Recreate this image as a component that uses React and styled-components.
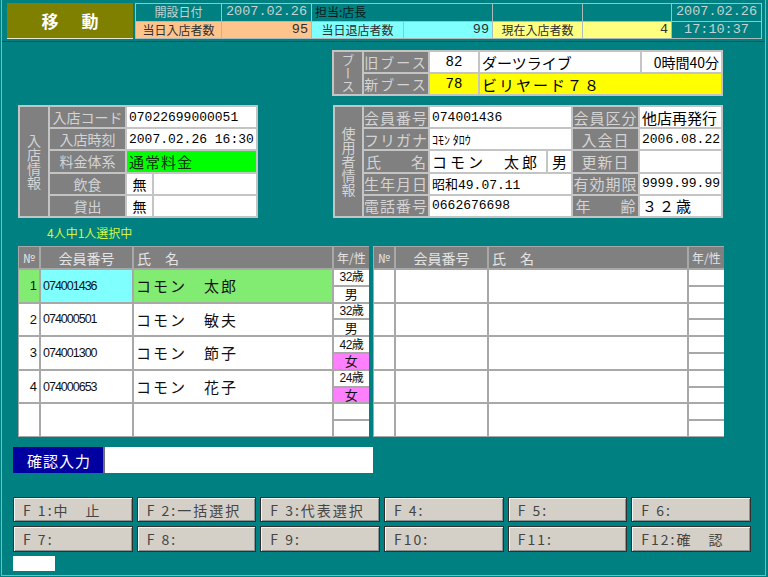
import styled, { createGlobalStyle } from "styled-components";

const JP = `"Noto Sans CJK JP", "Liberation Sans", sans-serif`;
const MONO = `"Liberation Mono", "DejaVu Sans Mono", "Noto Sans CJK JP", monospace`;

const GlobalStyle = createGlobalStyle`
  * { box-sizing: border-box; }
  html, body { margin: 0; padding: 0; background: #008080; }
  body { font-family: ${JP}; }
`;

const Screen = styled.div`
  width: 768px;
  height: 577px;
  background: #008080;
  padding: 0 2px 1px 1px;
`;

const Frame = styled.div`
  height: 100%;
  border: 1px solid #90b0b0;
  border-top: none;
  display: flex;
  flex-direction: column;
  align-items: flex-start;
`;

/* ---------- header ---------- */
const Header = styled.div`
  display: flex;
  gap: 2px;
  margin: 3px 0 0 5px;
  height: 36px;
`;

const Title = styled.div`
  width: 126px;
  height: 36px;
  background: #808000;
  color: #fff;
  font-weight: bold;
  font-size: 17px;
  letter-spacing: 3px;
  padding-left: 3px;
  display: flex;
  align-items: center;
  justify-content: center;
  border-bottom: 1px solid #e8e8d0;
`;

const HeaderGrid = styled.div`
  width: 627px;
  height: 36px;
  display: grid;
  grid-template-columns: 85px 89px 91px 88px 89px 88px 1fr;
  grid-template-rows: 1fr 1fr;
  gap: 1px;
  padding: 1px;
  background: #a8bcbc;
`;

const HCell = styled.div`
  background: ${(p) => p.$bg || "#008080"};
  color: ${(p) => p.$fg || "#c4d4d4"};
  grid-column: span ${(p) => p.$span || 1};
  font-family: ${(p) => (p.$mono ? MONO : JP)};
  font-size: ${(p) => (p.$mono ? "13.5px" : "12px")};
  line-height: 16px;
  padding: 0 3px;
  display: flex;
  align-items: center;
  justify-content: ${(p) =>
    p.$align === "right" ? "flex-end" : p.$align === "left" ? "flex-start" : "center"};
`;

const Divider = styled.div`
  align-self: stretch;
  height: 1px;
  margin-top: 2px;
  background: #005a5a;
`;

/* ---------- info panels ---------- */
const Panel = styled.div`
  display: grid;
  gap: 2px;
  padding: 2px;
  background: #c4c4c4;
  width: ${(p) => p.$w}px;
  height: ${(p) => p.$h}px;
  grid-template-columns: ${(p) => p.$cols};
  grid-template-rows: repeat(${(p) => p.$rows}, 1fr);
  margin-left: ${(p) => p.$ml || 0}px;
  margin-top: ${(p) => p.$mt || 0}px;
`;

const VLabel = styled.div`
  grid-row: 1 / span ${(p) => p.$rows};
  background: #808080;
  color: #d4d4d4;
  display: flex;
  align-items: center;
  justify-content: center;
`;

const VText = styled.span`
  writing-mode: vertical-rl;
  font-size: ${(p) => p.$fs || 14}px;
  line-height: 1;
`;

const Label = styled.div`
  background: #808080;
  color: #d4d4d4;
  font-size: ${(p) => p.$fs || 15}px;
  letter-spacing: ${(p) => p.$ls || 0}px;
  white-space: pre;
  display: flex;
  align-items: center;
  justify-content: center;
  overflow: hidden;
`;

const Value = styled.div`
  background: ${(p) => p.$bg || "#fff"};
  color: ${(p) => p.$fg || "#000"};
  grid-column: span ${(p) => p.$span || 1};
  font-family: ${(p) => (p.$mono ? MONO : JP)};
  font-size: ${(p) => p.$fs || (p.$mono ? 13 : 15)}px;
  letter-spacing: ${(p) => p.$ls || 0}px;
  white-space: pre;
  padding: 0 2px;
  display: flex;
  align-items: center;
  overflow: hidden;
  justify-content: ${(p) =>
    p.$align === "right" ? "flex-end" : p.$align === "center" ? "center" : "flex-start"};
`;

const InfoRow = styled.div`
  display: flex;
  margin-top: 9px;
`;

const SelectNote = styled.div`
  margin: 8px 0 0 45px;
  color: #d4f548;
  font-size: 12px;
  line-height: 14px;
`;

/* ---------- tables ---------- */
const TableRow = styled.div`
  display: flex;
  gap: 4px;
  margin: 6px 0 0 16px;
`;

const Table = styled.div`
  width: 351px;
  height: 191px;
  display: grid;
  grid-template-columns: 20px 91px 198px 1fr;
  grid-template-rows: 21px repeat(5, 1fr);
  gap: 2px;
  padding: 1px;
  background: #a8a8a8;
`;

const TH = styled.div`
  background: #808080;
  color: #e4e4e4;
  font-size: ${(p) => p.$fs || 14}px;
  display: flex;
  align-items: center;
  white-space: pre;
  padding: 0 3px;
  justify-content: ${(p) => (p.$align === "left" ? "flex-start" : "center")};
`;

const TD = styled.div`
  background: ${(p) => p.$bg || "#fff"};
  color: #101010;
  display: flex;
  align-items: center;
  white-space: pre;
  overflow: hidden;
  padding: 0 2px;
  justify-content: ${(p) => (p.$align === "right" ? "flex-end" : "flex-start")};
`;

const NoText = styled.span`
  font-family: "Liberation Sans", sans-serif;
  font-size: 13px;
`;

const IdText = styled.span`
  font-family: "Liberation Sans", sans-serif;
  font-size: 12.5px;
  letter-spacing: -1px;
`;

const NameText = styled.span`
  font-size: 15px;
  letter-spacing: 2px;
`;

const AgeSex = styled.div`
  display: grid;
  grid-template-rows: 1fr 1fr;
  gap: 2px;
  background: #a8a8a8;
  min-height: 0;
`;

const Sub = styled.div`
  background: ${(p) => p.$bg || "#fff"};
  color: #101010;
  font-size: ${(p) => p.$fs || 13}px;
  line-height: 14px;
  height: 100%;
  min-height: 0;
  letter-spacing: ${(p) => p.$ls || 0}px;
  font-family: ${(p) => (p.$latin ? `"Liberation Sans", "Noto Sans CJK JP", sans-serif` : JP)};
  display: flex;
  align-items: center;
  justify-content: center;
  white-space: nowrap;
`;

/* ---------- bottom ---------- */
const ConfirmRow = styled.div`
  display: flex;
  height: 26px;
  margin: 10px 0 0 11px;
`;

const ConfirmLabel = styled.div`
  width: 90px;
  background: #0000a0;
  color: #fff;
  font-size: 15px;
  letter-spacing: 1px;
  padding-left: 14px;
  display: flex;
  align-items: center;
`;

const ConfirmInput = styled.div`
  width: 270px;
  background: #fff;
  border-left: 2px solid #707070;
`;

const FKeys = styled.div`
  width: 738px;
  display: grid;
  grid-template-columns: repeat(6, 1fr);
  grid-template-rows: 25px 26px;
  gap: 4px;
  margin: 24px 0 0 11px;
`;

const FKey = styled.button`
  background: #d4d0c8;
  border: 1px solid #303030;
  box-shadow: inset 1px 1px 0 #f4f4f0, inset -1px -1px 0 #909090;
  color: #454545;
  font-family: ${JP};
  font-size: 14px;
  letter-spacing: 2px;
  text-align: left;
  white-space: pre;
  padding: 0 0 0 9px;
  margin: 0;
`;

const StatusBox = styled.div`
  width: 42px;
  height: 15px;
  background: #fff;
  margin: 4px 0 0 11px;
`;

const members = [
  { no: 1, id: "074001436", name: "コモン　太郎", age: "32歳", sex: "男", sel: true },
  { no: 2, id: "074000501", name: "コモン　敏夫", age: "32歳", sex: "男" },
  { no: 3, id: "074001300", name: "コモン　節子", age: "42歳", sex: "女" },
  { no: 4, id: "074000653", name: "コモン　花子", age: "24歳", sex: "女" },
  null,
];

const fkeys = [
  "F 1:中　止", "F 2:一括選択", "F 3:代表選択", "F 4:", "F 5:", "F 6:",
  "F 7:", "F 8:", "F 9:", "F10:", "F11:", "F12:確　認",
];

const GREEN = "#82ec72";

function MemberTable({ rows }) {
  return (
    <Table>
      <TH $fs={12}>№</TH>
      <TH>会員番号</TH>
      <TH $align="left">氏　名</TH>
      <TH $fs={12}>年/性</TH>
      {rows.map((m, i) =>
        m ? (
          [
            <TD key={`n${i}`} $align="right" $bg={m.sel ? GREEN : "#fff"}>
              <NoText>{m.no}</NoText>
            </TD>,
            <TD key={`i${i}`} $bg={m.sel ? "#80ffff" : "#fff"}>
              <IdText>{m.id}</IdText>
            </TD>,
            <TD key={`m${i}`} $bg={m.sel ? GREEN : "#fff"}>
              <NameText>{m.name}</NameText>
            </TD>,
            <AgeSex key={`a${i}`}>
              <Sub $fs={12} $ls={-0.6} $latin>{m.age}</Sub>
              <Sub $bg={m.sex === "女" ? "#ff80ff" : "#fff"}>{m.sex}</Sub>
            </AgeSex>,
          ]
        ) : (
          [
            <TD key={`n${i}`} />,
            <TD key={`i${i}`} />,
            <TD key={`m${i}`} />,
            <AgeSex key={`a${i}`}>
              <Sub />
              <Sub />
            </AgeSex>,
          ]
        )
      )}
    </Table>
  );
}

export default function App() {
  return (
    <Screen>
      <GlobalStyle />
      <Frame>
        <Header>
          <Title>移　動</Title>
          <HeaderGrid>
            <HCell>開設日付</HCell>
            <HCell $mono>2007.02.26</HCell>
            <HCell $span={2} $align="left" $fg="#0a1a1a">担当:店長</HCell>
            <HCell />
            <HCell />
            <HCell $mono>2007.02.26</HCell>
            <HCell $bg="#ffc48c" $fg="#303030">当日入店者数</HCell>
            <HCell $bg="#ffc48c" $fg="#303030" $align="right" $mono>95</HCell>
            <HCell $bg="#80ffff" $fg="#303030">当日退店者数</HCell>
            <HCell $bg="#80ffff" $fg="#303030" $align="right" $mono>99</HCell>
            <HCell $bg="#ffff80" $fg="#303030">現在入店者数</HCell>
            <HCell $bg="#ffff80" $fg="#303030" $align="right" $mono>4</HCell>
            <HCell $mono>17:10:37</HCell>
          </HeaderGrid>
        </Header>
        <Divider />

        <Panel $w={391} $h={46} $rows={2} $cols="28px 64px 48px 1fr 79px" $ml={330} $mt={8}>
          <VLabel $rows={2}><VText $fs={13}>ブース</VText></VLabel>
          <Label $fs={14} $ls={2}>旧ブース</Label>
          <Value $mono $align="center" $fs={14}>82</Value>
          <Value>ダーツライブ</Value>
          <Value $align="right" $fs={14}>0時間40分</Value>
          <Label $fs={14} $ls={2}>新ブース</Label>
          <Value $mono $align="center" $fs={14} $bg="#ffff00">78</Value>
          <Value $span={2} $bg="#ffff00" $ls={2}>ビリヤード７８</Value>
        </Panel>

        <InfoRow>
          <Panel $w={240} $h={113} $rows={5} $cols="28px 75px 25px 1fr" $ml={16}>
            <VLabel $rows={5}><VText>入店情報</VText></VLabel>
            <Label $fs={14}>入店コード</Label>
            <Value $span={2} $mono>07022699000051</Value>
            <Label $fs={14}>入店時刻</Label>
            <Value $span={2} $mono>2007.02.26 16:30</Value>
            <Label $fs={14}>料金体系</Label>
            <Value $span={2} $bg="#00ff00" $fg="#103010" $ls={1}>通常料金</Value>
            <Label $fs={14}>飲食</Label>
            <Value $align="center" $fs={14}>無</Value>
            <Value />
            <Label $fs={14}>貸出</Label>
            <Value $align="center" $fs={14}>無</Value>
            <Value />
          </Panel>

          <Panel $w={390} $h={113} $rows={5} $cols="27px 64px 1fr 23px 65px 81px" $ml={75}>
            <VLabel $rows={5}><VText>使用者情報</VText></VLabel>
            <Label $ls={1}>会員番号</Label>
            <Value $span={2} $mono>074001436</Value>
            <Label $ls={1}>会員区分</Label>
            <Value>他店再発行</Value>
            <Label $ls={1}>フリガナ</Label>
            <Value $span={2} $fs={12}>ｺﾓﾝ ﾀﾛｳ</Value>
            <Label $ls={1}>入会日</Label>
            <Value $mono>2006.08.22</Value>
            <Label>{"氏　　名"}</Label>
            <Value $ls={3}>コモン　太郎</Value>
            <Value $align="center">男</Value>
            <Label $ls={1}>更新日</Label>
            <Value />
            <Label $ls={1}>生年月日</Label>
            <Value $span={2} $mono>昭和49.07.11</Value>
            <Label $ls={1}>有効期限</Label>
            <Value $mono>9999.99.99</Value>
            <Label $ls={1}>電話番号</Label>
            <Value $span={2} $mono>0662676698</Value>
            <Label>{"年　　齢"}</Label>
            <Value $ls={2}>３２歳</Value>
          </Panel>
        </InfoRow>

        <SelectNote>4人中1人選択中</SelectNote>

        <TableRow>
          <MemberTable rows={members} />
          <MemberTable rows={[null, null, null, null, null]} />
        </TableRow>

        <ConfirmRow>
          <ConfirmLabel>確認入力</ConfirmLabel>
          <ConfirmInput />
        </ConfirmRow>

        <FKeys>
          {fkeys.map((k) => (
            <FKey key={k}>{k}</FKey>
          ))}
        </FKeys>

        <StatusBox />
      </Frame>
    </Screen>
  );
}
